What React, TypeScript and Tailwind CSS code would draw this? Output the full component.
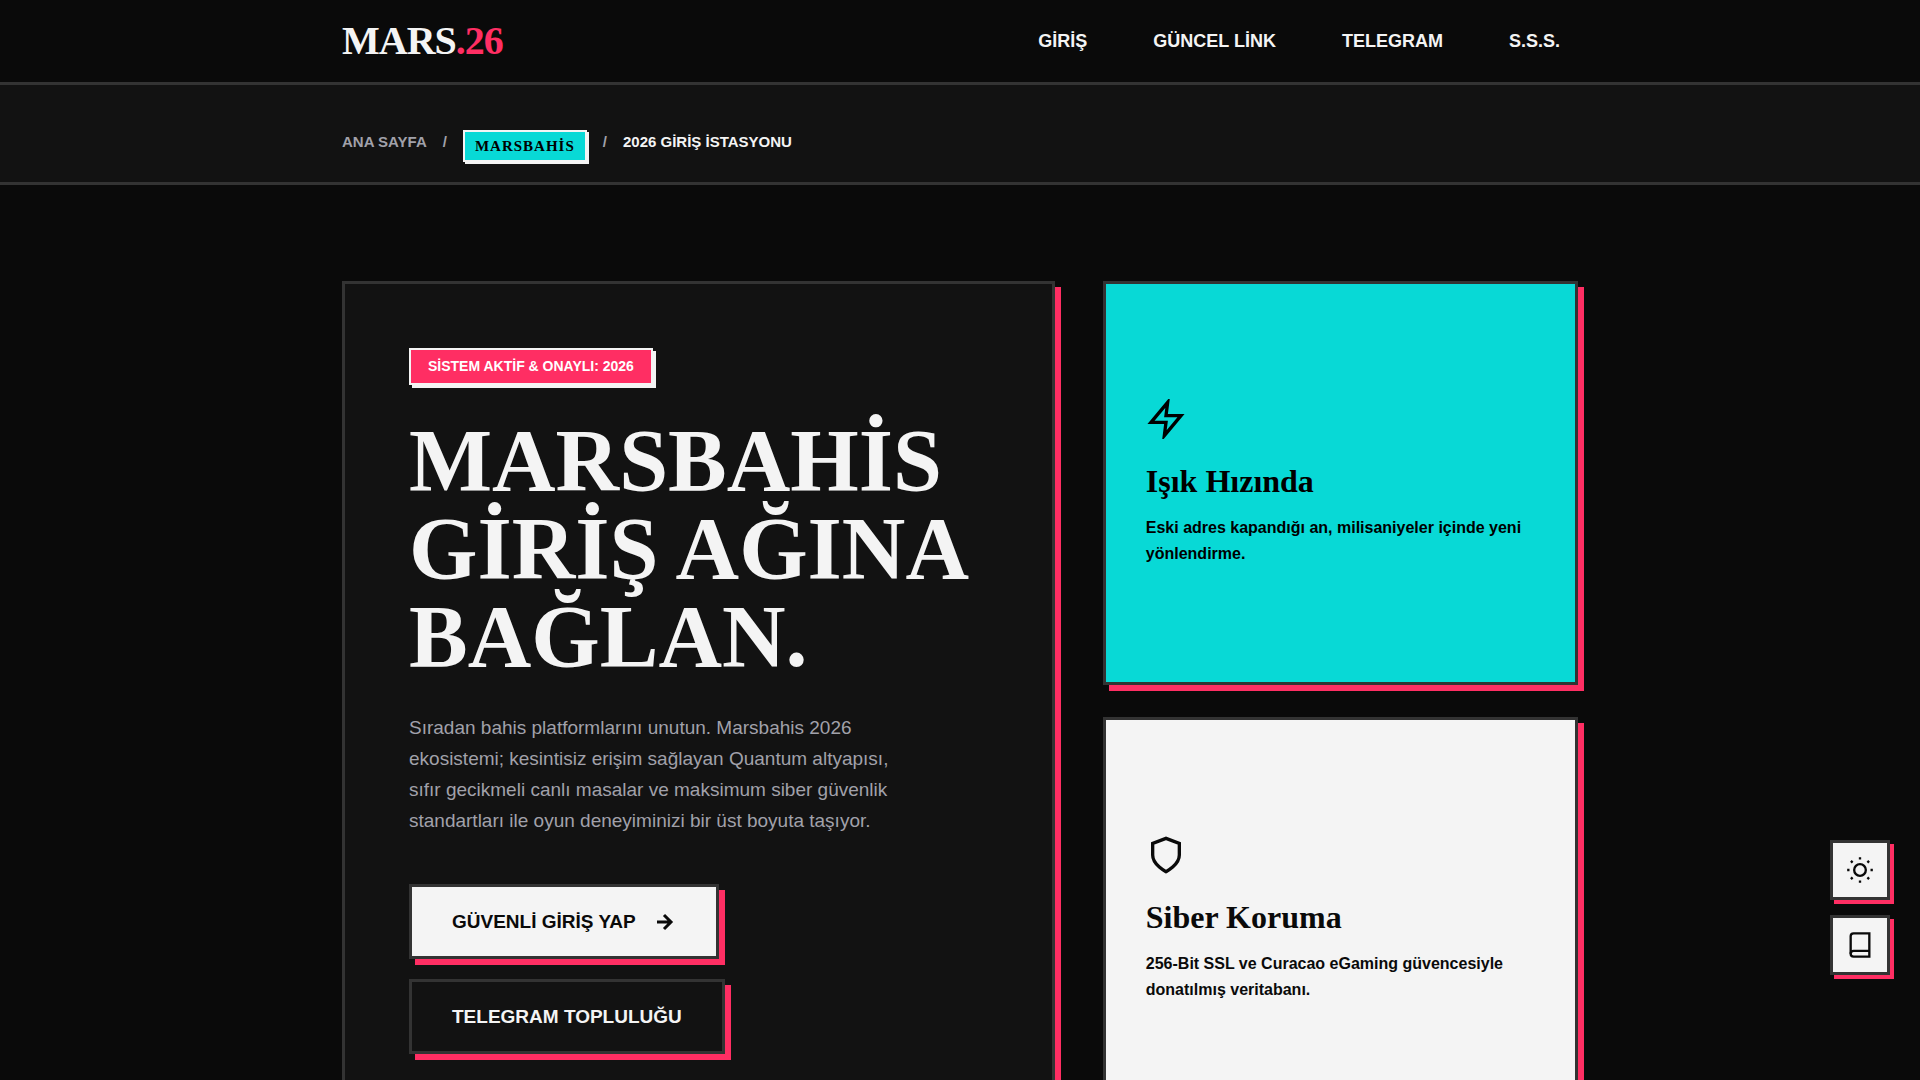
import type { ReactNode } from "react";

const navLinks = [
  { href: "#giris", label: "GİRİŞ" },
  { href: "#guncel-link", label: "GÜNCEL LİNK" },
  { href: "#telegram", label: "TELEGRAM" },
  { href: "#sss", label: "S.S.S." },
];

function Icon({ className, strokeWidth = 2, children }: { className: string; strokeWidth?: number; children: ReactNode }) {
  return (
    <svg
      viewBox="0 0 24 24"
      fill="none"
      stroke="currentColor"
      strokeWidth={strokeWidth}
      className={className}
      aria-hidden="true"
    >
      {children}
    </svg>
  );
}

function SiteHeader() {
  return (
    <header className="border-b-3 border-[#333333] bg-[#0a0a0a]">
      <div className="mx-auto flex max-w-[1300px] items-center justify-between px-8 py-5">
        <a href="#" className="font-['Liberation_Serif',serif] text-[40px] leading-[42px] font-bold tracking-tight">
          MARS<span className="text-[#ff2e63]">.26</span>
        </a>
        <nav className="flex items-center gap-[30px] text-lg font-bold">
          {navLinks.map((link) => (
            <a key={link.href} href={link.href} className="px-[18px] hover:text-[#08d9d6]">
              {link.label}
            </a>
          ))}
        </nav>
      </div>
    </header>
  );
}

function Breadcrumb() {
  return (
    <nav aria-label="Breadcrumb" className="border-b-3 border-[#333333] bg-[#121212]">
      <ol className="mx-auto flex max-w-[1300px] items-start gap-4 px-8 pt-[45px] pb-5 text-[15px] leading-6 font-bold text-[#a1a1aa]">
        <li>
          <a href="#">ANA SAYFA</a>
        </li>
        <li aria-hidden="true">/</li>
        <li>
          <a
            href="#marsbahis"
            className="block border-2 border-[#f4f4f4] bg-[#08d9d6] px-2.5 py-0.5 font-['Liberation_Serif',serif] tracking-[1px] text-black shadow-[2px_2px_0_#f4f4f4]"
          >
            MARSBAHİS
          </a>
        </li>
        <li aria-hidden="true">/</li>
        <li className="text-[#f4f4f4]">2026 GİRİŞ İSTASYONU</li>
      </ol>
    </nav>
  );
}

function FeatureCard({ className, icon, title, text }: { className: string; icon: ReactNode; title: string; text: string }) {
  return (
    <article
      className={`flex flex-1 flex-col justify-center border-3 border-[#333333] px-10 shadow-[6px_6px_0_#ff2e63] ${className}`}
    >
      <Icon className="mb-6 size-10">{icon}</Icon>
      <h2 className="mb-4 font-['Liberation_Serif',serif] text-[32px] leading-9 font-bold">{title}</h2>
      <p className="text-base leading-[26px] font-bold">{text}</p>
    </article>
  );
}

export default function App() {
  return (
    <div className="min-h-screen bg-[#0a0a0a] font-['Liberation_Sans',sans-serif] text-[#f4f4f4]">
      <SiteHeader />
      <Breadcrumb />

      <main className="mx-auto grid max-w-[1300px] grid-cols-[3fr_2fr] gap-12 px-8 py-24">
        <section className="border-3 border-[#333333] bg-[#121212] p-16 shadow-[6px_6px_0_#ff2e63]">
          <div className="mb-8 w-fit border-2 border-[#f4f4f4] bg-[#ff2e63] px-[17px] py-2 text-sm leading-[17px] font-bold text-white shadow-[3px_3px_0_#f4f4f4]">
            SİSTEM AKTİF &amp; ONAYLI: 2026
          </div>
          <h1 className="mb-[31px] font-['Liberation_Serif',serif] text-[88px] leading-[88px] font-bold">
            MARSBAHİS GİRİŞ AĞINA BAĞLAN.
          </h1>
          <p className="mb-12 max-w-[500px] text-[19px] leading-[31px] text-[#a1a1aa]">
            Sıradan bahis platformlarını unutun. Marsbahis 2026 ekosistemi; kesintisiz erişim sağlayan Quantum altyapısı,
            sıfır gecikmeli canlı masalar ve maksimum siber güvenlik standartları ile oyun deneyiminizi bir üst boyuta
            taşıyor.
          </p>

          {/* Call to action */}
          <div className="flex flex-wrap gap-5 text-[19px] leading-[29px] font-bold">
            <a
              href="#giris"
              className="flex items-center gap-4 border-3 border-[#333333] bg-[#f4f4f4] px-10 py-5 text-[#0a0a0a] shadow-[6px_6px_0_#ff2e63]"
            >
              GÜVENLİ GİRİŞ YAP
              <Icon className="size-6" strokeWidth={3}>
                <path d="M5 12h14M12 5l7 7-7 7" />
              </Icon>
            </a>
            <a
              href="#telegram"
              className="flex items-center border-3 border-[#333333] bg-[#121212] px-10 py-5 shadow-[6px_6px_0_#ff2e63]"
            >
              TELEGRAM TOPLULUĞU
            </a>
          </div>
        </section>

        <div className="flex flex-col gap-8">
          <FeatureCard
            className="bg-[#08d9d6] text-black"
            icon={<polygon points="13 2 3 14 12 14 11 22 21 10 12 10 13 2" />}
            title="Işık Hızında"
            text="Eski adres kapandığı an, milisaniyeler içinde yeni yönlendirme."
          />
          <FeatureCard
            className="bg-[#f4f4f4] text-[#0a0a0a]"
            icon={<path d="M12 22s8-4 8-10V5l-8-3-8 3v7c0 6 8 10 8 10z" />}
            title="Siber Koruma"
            text="256-Bit SSL ve Curacao eGaming güvencesiyle donatılmış veritabanı."
          />
        </div>
      </main>

      {/* Floating tools */}
      <div className="fixed right-[30px] bottom-[105px] flex flex-col gap-[15px] text-[#0a0a0a]">
        <button
          type="button"
          aria-label="Tema"
          className="flex size-[60px] items-center justify-center border-3 border-[#333333] bg-[#f4f4f4] shadow-[4px_4px_0_#ff2e63]"
        >
          <Icon className="size-7">
            <circle cx="12" cy="12" r="5" />
            <path d="M12 1v2M12 21v2M4.22 4.22l1.42 1.42M18.36 18.36l1.42 1.42M1 12h2M21 12h2M4.22 19.78l1.42-1.42M18.36 5.64l1.42-1.42" />
          </Icon>
        </button>
        <button
          type="button"
          aria-label="Okuma modu"
          className="flex size-[60px] items-center justify-center border-3 border-[#333333] bg-[#f4f4f4] shadow-[4px_4px_0_#ff2e63]"
        >
          <Icon className="size-7">
            <path d="M4 19.5A2.5 2.5 0 0 1 6.5 17H20" />
            <path d="M6.5 2H20v20H6.5A2.5 2.5 0 0 1 4 19.5v-15A2.5 2.5 0 0 1 6.5 2z" />
          </Icon>
        </button>
      </div>
    </div>
  );
}
